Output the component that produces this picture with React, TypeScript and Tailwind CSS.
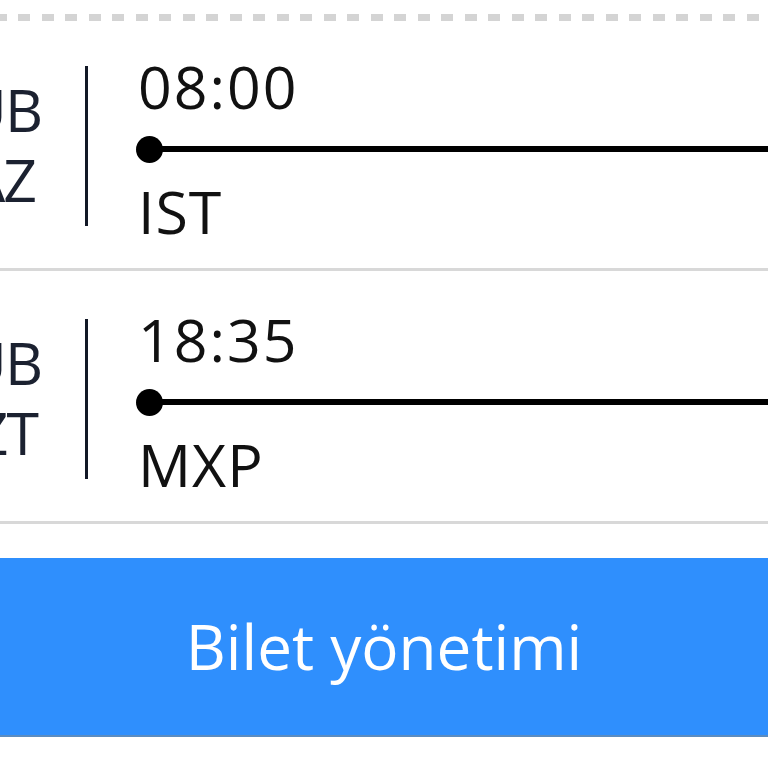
import React from "react";

function Row({ h, pt, top, bottom, time, code, bottomPad }: { h: string; pt: string; top: string; bottom: string; time: string; code: string; bottomPad: string }) {
  return (
    <div className={`${h} ${pt} flex items-start`}>
      <div className="mt-[53px] w-[41px] shrink-0 flex flex-col items-end text-[59px] leading-[70px] tracking-[-2px] text-[#1b2130] whitespace-nowrap">
        <div>{top}</div>
        <div className={bottomPad}>{bottom}</div>
      </div>
      <div className="mt-[45px] ml-[44px] w-[3px] h-[160px] shrink-0 bg-[#121826]" />
      <div className="mt-[35px] ml-[48px] flex-1 flex flex-col text-[#111] whitespace-nowrap">
        <div className="pl-[2px] text-[59px] leading-[60px] tracking-[2px]">{time}</div>
        <div className="flex items-center h-[28px] mt-[19px]">
          <div className="w-[27px] h-[27px] rounded-full bg-black shrink-0" />
          <div className="flex-1 h-[6px] bg-black -ml-[2px]" />
        </div>
        <div className="mt-[18px] pl-[2px] text-[59px] leading-[60px] tracking-[1px]">{code}</div>
      </div>
    </div>
  );
}

export default function App() {
  return (
    <div className="w-[768px] h-[768px] bg-white overflow-hidden font-['Open_Sans',sans-serif]">
      <div className="h-[14px]" />
      <div className="h-[7px] bg-[repeating-linear-gradient(90deg,#d4d4d4_0_6.5px,transparent_6.5px_18px,#d4d4d4_18px_23.5px)]" />
      <Row h="h-[247px]" pt="pt-0" top="ŞUB" bottom="PAZ" time="08:00" code="IST" bottomPad="pr-[6px]" />
      <div className="h-[3px] bg-[#d8d8d8]" />
      <Row h="h-[250px]" pt="pt-[3px]" top="ŞUB" bottom="PZT" time="18:35" code="MXP" bottomPad="pr-[4px]" />
      <div className="h-[3px] bg-[#d8d8d8]" />
      <div className="h-[34px]" />
      <div className="h-[179px] bg-[#2f8ffd] border-b-2 border-[#5b8cc0] flex items-center justify-center text-white text-[62px]">
        Bilet yönetimi
      </div>
    </div>
  );
}
